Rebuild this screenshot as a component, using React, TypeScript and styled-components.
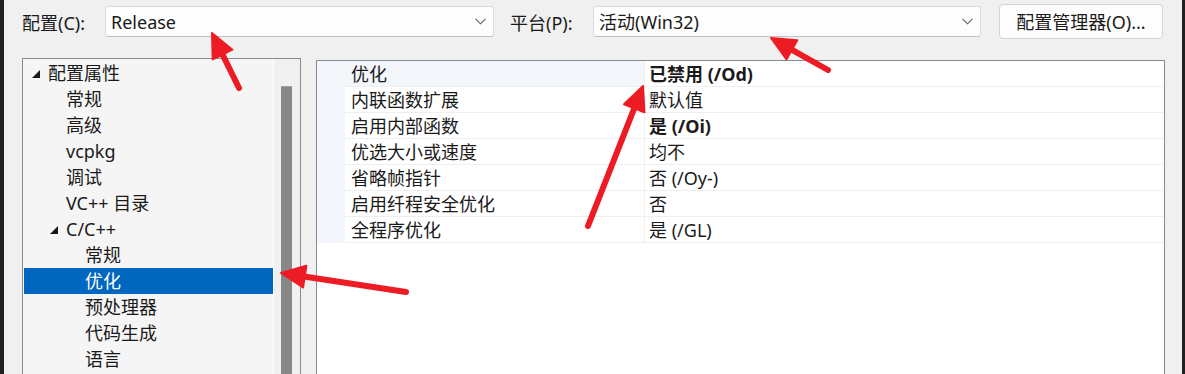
import React from 'react';
import styled, { createGlobalStyle } from 'styled-components';

const GlobalStyle = createGlobalStyle`
  html, body {
    margin: 0;
    padding: 0;
    background: #f0f0f0;
  }
  body {
    font-family: "Noto Sans", "Noto Sans CJK SC", sans-serif;
    font-size: 18px;
    color: #1a1a1a;
  }
`;

const Window = styled.div`
  position: relative;
  width: 1185px;
  height: 374px;
  box-sizing: border-box;
  overflow: hidden;
  background: #f0f0f0;
  border-left: 4px solid #202020;
  border-right: 3px solid #202020;
`;

const TopBar = styled.div`
  display: flex;
  align-items: center;
  height: 35px;
  margin-top: 4px;
  padding-left: 18px;
`;

const FieldLabel = styled.span<{ $width: number }>`
  width: ${(p) => p.$width}px;
  flex: none;
  padding-top: 2px;
  line-height: 20px;
  white-space: nowrap;
`;

const Combo = styled.div<{ $width: number; $gap?: number }>`
  display: flex;
  align-items: center;
  justify-content: space-between;
  box-sizing: border-box;
  width: ${(p) => p.$width}px;
  height: 31px;
  margin-right: ${(p) => p.$gap ?? 0}px;
  padding: 0 7px 0 5px;
  background: #fdfdfd;
  border: 1px solid #dcdcdc;
  border-bottom-color: #c2c2c2;
  border-radius: 3px;
  line-height: 20px;
`;

const ActionButton = styled.button`
  box-sizing: border-box;
  width: 164px;
  height: 35px;
  padding: 0;
  background: #fdfdfd;
  border: 1px solid #d3d3d3;
  border-radius: 4px;
  font: inherit;
  color: inherit;
  line-height: 20px;
`;

const Main = styled.div`
  display: flex;
  align-items: flex-start;
  margin-top: 19px;
  padding-left: 18px;
`;

const TreePanel = styled.div`
  display: flex;
  width: 279px;
  height: 330px;
  box-sizing: border-box;
  border: 1px solid #868a92;
  border-bottom: none;
  background: #f0f0f0;
`;

const TreeList = styled.div`
  width: 250px;
  box-sizing: border-box;
  padding: 1px 0 0 1px;
  background: #f5f5f5;
`;

const TreeRow = styled.div<{ $selected?: boolean }>`
  display: flex;
  align-items: center;
  height: 26px;
  line-height: 26px;
  padding-top: 1px;
  box-sizing: border-box;
  white-space: nowrap;
  background: ${(p) => (p.$selected ? '#0067c0' : 'transparent')};
  color: ${(p) => (p.$selected ? '#ffffff' : 'inherit')};
`;

const Expander = styled.svg<{ $left: number }>`
  flex: none;
  width: 8px;
  height: 8px;
  margin-left: ${(p) => p.$left}px;
  margin-right: 8px;
  margin-top: 1px;
`;

const TreeText = styled.span<{ $indent: number }>`
  padding-left: ${(p) => p.$indent}px;
  line-height: 25px;
`;

const ScrollTrack = styled.div`
  width: 26px;
  border-left: 1px solid #ffffff;
  background: #f0f0f0;
`;

const ScrollThumb = styled.div`
  width: 11px;
  height: 300px;
  margin: 27px 0 0 7px;
  background: #878787;
  border-top: 1px solid #a0a0a0;
`;

const GridPanel = styled.div`
  width: 849px;
  height: 330px;
  margin-left: 15px;
  margin-top: 2px;
  box-sizing: border-box;
  border: 1px solid #868a92;
  border-bottom: none;
  background: #ffffff;
`;

const GridRow = styled.div`
  display: flex;
  height: 26px;
`;

const RowMargin = styled.div`
  width: 28px;
  flex: none;
  background: #f3f6fb;
`;

const NameCell = styled.div<{ $selected?: boolean }>`
  width: 300px;
  flex: none;
  box-sizing: border-box;
  padding: 1px 0 0 6px;
  line-height: 24px;
  border-right: 1px solid #efefef;
  border-bottom: 1px solid #efefef;
  background: ${(p) => (p.$selected ? '#f3f6fb' : '#ffffff')};
  white-space: nowrap;
`;

const ValueCell = styled.div<{ $bold?: boolean }>`
  flex: 1;
  box-sizing: border-box;
  padding: 1px 0 0 4px;
  line-height: 24px;
  border-bottom: 1px solid #efefef;
  font-weight: ${(p) => (p.$bold ? 700 : 400)};
  white-space: nowrap;
`;

const Overlay = styled.svg`
  position: absolute;
  left: -4px;
  top: 0;
  width: 1185px;
  height: 374px;
  pointer-events: none;
`;

const Chevron = () => (
  <svg width="11" height="7" viewBox="0 0 11 7">
    <polyline points="0.5,0.8 5.5,5.8 10.5,0.8" fill="none" stroke="#606060" strokeWidth="1.1" />
  </svg>
);

const ExpandedGlyph = ({ left }: { left: number }) => (
  <Expander $left={left} viewBox="0 0 8 8">
    <polygon points="8,0 8,8 0,8" fill="#1a1a1a" />
  </Expander>
);

type TreeItem = { label: string; level: number; expanded?: boolean; selected?: boolean };

const tree: TreeItem[] = [
  { label: '配置属性', level: 0, expanded: true },
  { label: '常规', level: 1 },
  { label: '高级', level: 1 },
  { label: 'vcpkg', level: 1 },
  { label: '调试', level: 1 },
  { label: 'VC++ 目录', level: 1 },
  { label: 'C/C++', level: 1, expanded: true },
  { label: '常规', level: 2 },
  { label: '优化', level: 2, selected: true },
  { label: '预处理器', level: 2 },
  { label: '代码生成', level: 2 },
  { label: '语言', level: 2 },
];

type Prop = { name: string; value: string; bold?: boolean };

const props: Prop[] = [
  { name: '优化', value: '已禁用 (/Od)', bold: true },
  { name: '内联函数扩展', value: '默认值' },
  { name: '启用内部函数', value: '是 (/Oi)', bold: true },
  { name: '优选大小或速度', value: '均不' },
  { name: '省略帧指针', value: '否 (/Oy-)' },
  { name: '启用纤程安全优化', value: '否' },
  { name: '全程序优化', value: '是 (/GL)' },
];

// annotation arrows: [tailX, tailY, tipX, tipY]
const arrows: [number, number, number, number][] = [
  [239, 88, 212, 33],
  [828, 70, 771, 38],
  [588, 226, 643, 86],
  [406, 292, 281, 273],
];

const Arrow = ({ a }: { a: [number, number, number, number] }) => {
  const [x1, y1, x2, y2] = a;
  const dx = x2 - x1;
  const dy = y2 - y1;
  const len = Math.hypot(dx, dy);
  const ux = dx / len;
  const uy = dy / len;
  const headLen = 24;
  const half = 11;
  const bx = x2 - ux * headLen;
  const by = y2 - uy * headLen;
  const pts = `${x2},${y2} ${bx - uy * half},${by + ux * half} ${bx + uy * half},${by - ux * half}`;
  return (
    <g>
      <line x1={x1} y1={y1} x2={bx + ux * 4} y2={by + uy * 4} stroke="#ed1c24" strokeWidth="6" strokeLinecap="round" />
      <polygon points={pts} fill="#ed1c24" strokeLinejoin="round" stroke="#ed1c24" strokeWidth="2" />
    </g>
  );
};

export default function App() {
  return (
    <Window>
      <GlobalStyle />
      <TopBar>
        <FieldLabel $width={83}>配置(C):</FieldLabel>
        <Combo $width={389} $gap={16}>
          <span>Release</span>
          <Chevron />
        </Combo>
        <FieldLabel $width={83}>平台(P):</FieldLabel>
        <Combo $width={388} $gap={18}>
          <span>活动(Win32)</span>
          <Chevron />
        </Combo>
        <ActionButton>配置管理器(O)...</ActionButton>
      </TopBar>
      <Main>
        <TreePanel>
          <TreeList>
            {tree.map((t, i) => (
              <TreeRow key={i} $selected={t.selected}>
                {t.expanded ? (
                  <>
                    <ExpandedGlyph left={8 + t.level * 18} />
                    <TreeText $indent={0}>{t.label}</TreeText>
                  </>
                ) : (
                  <TreeText $indent={23 + t.level * 19}>{t.label}</TreeText>
                )}
              </TreeRow>
            ))}
          </TreeList>
          <ScrollTrack>
            <ScrollThumb />
          </ScrollTrack>
        </TreePanel>
        <GridPanel>
          {props.map((p, i) => (
            <GridRow key={i}>
              <RowMargin />
              <NameCell $selected={i === 0}>{p.name}</NameCell>
              <ValueCell $bold={p.bold}>{p.value}</ValueCell>
            </GridRow>
          ))}
        </GridPanel>
      </Main>
      <Overlay viewBox="0 0 1185 374">
        {arrows.map((a, i) => (
          <Arrow key={i} a={a} />
        ))}
      </Overlay>
    </Window>
  );
}
